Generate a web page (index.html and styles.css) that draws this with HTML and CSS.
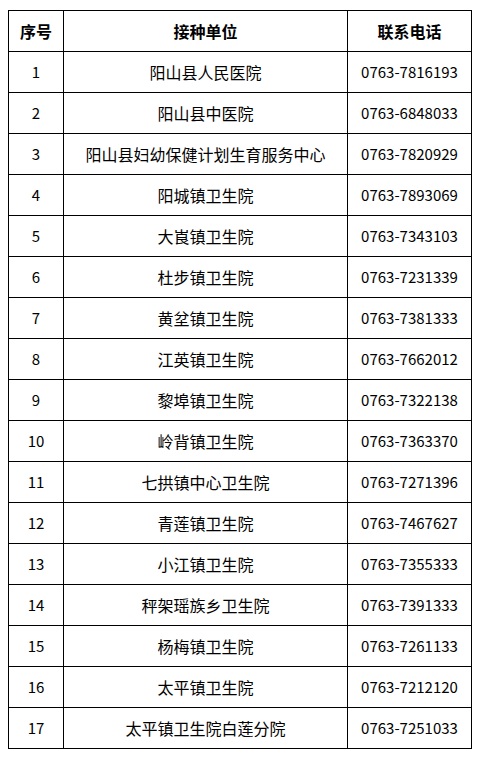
FILE: index.html
```html
<!DOCTYPE html>
<html lang="zh-CN">
<head>
<meta charset="utf-8">
<link rel="stylesheet" href="styles.css">
</head>
<body>
<table class="list">
  <colgroup>
    <col class="c-no">
    <col class="c-name">
    <col class="c-tel">
  </colgroup>
  <thead>
    <tr><th>序号</th><th>接种单位</th><th>联系电话</th></tr>
  </thead>
  <tbody>
    <tr><td>1</td><td>阳山县人民医院</td><td>0763-7816193</td></tr>
    <tr><td>2</td><td>阳山县中医院</td><td>0763-6848033</td></tr>
    <tr><td>3</td><td>阳山县妇幼保健计划生育服务中心</td><td>0763-7820929</td></tr>
    <tr><td>4</td><td>阳城镇卫生院</td><td>0763-7893069</td></tr>
    <tr><td>5</td><td>大崀镇卫生院</td><td>0763-7343103</td></tr>
    <tr><td>6</td><td>杜步镇卫生院</td><td>0763-7231339</td></tr>
    <tr><td>7</td><td>黄坌镇卫生院</td><td>0763-7381333</td></tr>
    <tr><td>8</td><td>江英镇卫生院</td><td>0763-7662012</td></tr>
    <tr><td>9</td><td>黎埠镇卫生院</td><td>0763-7322138</td></tr>
    <tr><td>10</td><td><span class="alt-glyph">岭</span>背镇卫生院</td><td>0763-7363370</td></tr>
    <tr><td>11</td><td>七拱镇中心卫生院</td><td>0763-7271396</td></tr>
    <tr><td>12</td><td>青莲镇卫生院</td><td>0763-7467627</td></tr>
    <tr><td>13</td><td>小江镇卫生院</td><td>0763-7355333</td></tr>
    <tr><td>14</td><td>秤架瑶族乡卫生院</td><td>0763-7391333</td></tr>
    <tr><td>15</td><td>杨梅镇卫生院</td><td>0763-7261133</td></tr>
    <tr><td>16</td><td>太平镇卫生院</td><td>0763-7212120</td></tr>
    <tr><td>17</td><td>太平镇卫生院白莲分院</td><td>0763-7251033</td></tr>
  </tbody>
</table>
</body>
</html>
```
FILE: styles.css
```css
html, body {
  background: #ffffff;
}
body {
  margin: 10px 8px 8px 8px;
  font-family: "Noto Sans CJK SC", "Noto Sans", sans-serif;
  color: #000000;
}
.list {
  border-collapse: collapse;
  table-layout: fixed;
  width: 463px;
}
.c-no { width: 55px; }
.c-name { width: 284px; }
.c-tel { width: 124px; }
.list th,
.list td {
  border: 1px solid #000000;
  height: 41px;
  padding: 0;
  text-align: center;
  vertical-align: middle;
  font-size: 16px;
  line-height: 20px;
  box-sizing: border-box;
}
.list th {
  font-weight: bold;
}
.list td {
  font-weight: normal;
}
.list td:first-child,
.list td:last-child {
  font-size: 15px;
}
.alt-glyph {
  font-family: "Noto Sans CJK TC", "Noto Sans CJK SC", sans-serif;
}
```
